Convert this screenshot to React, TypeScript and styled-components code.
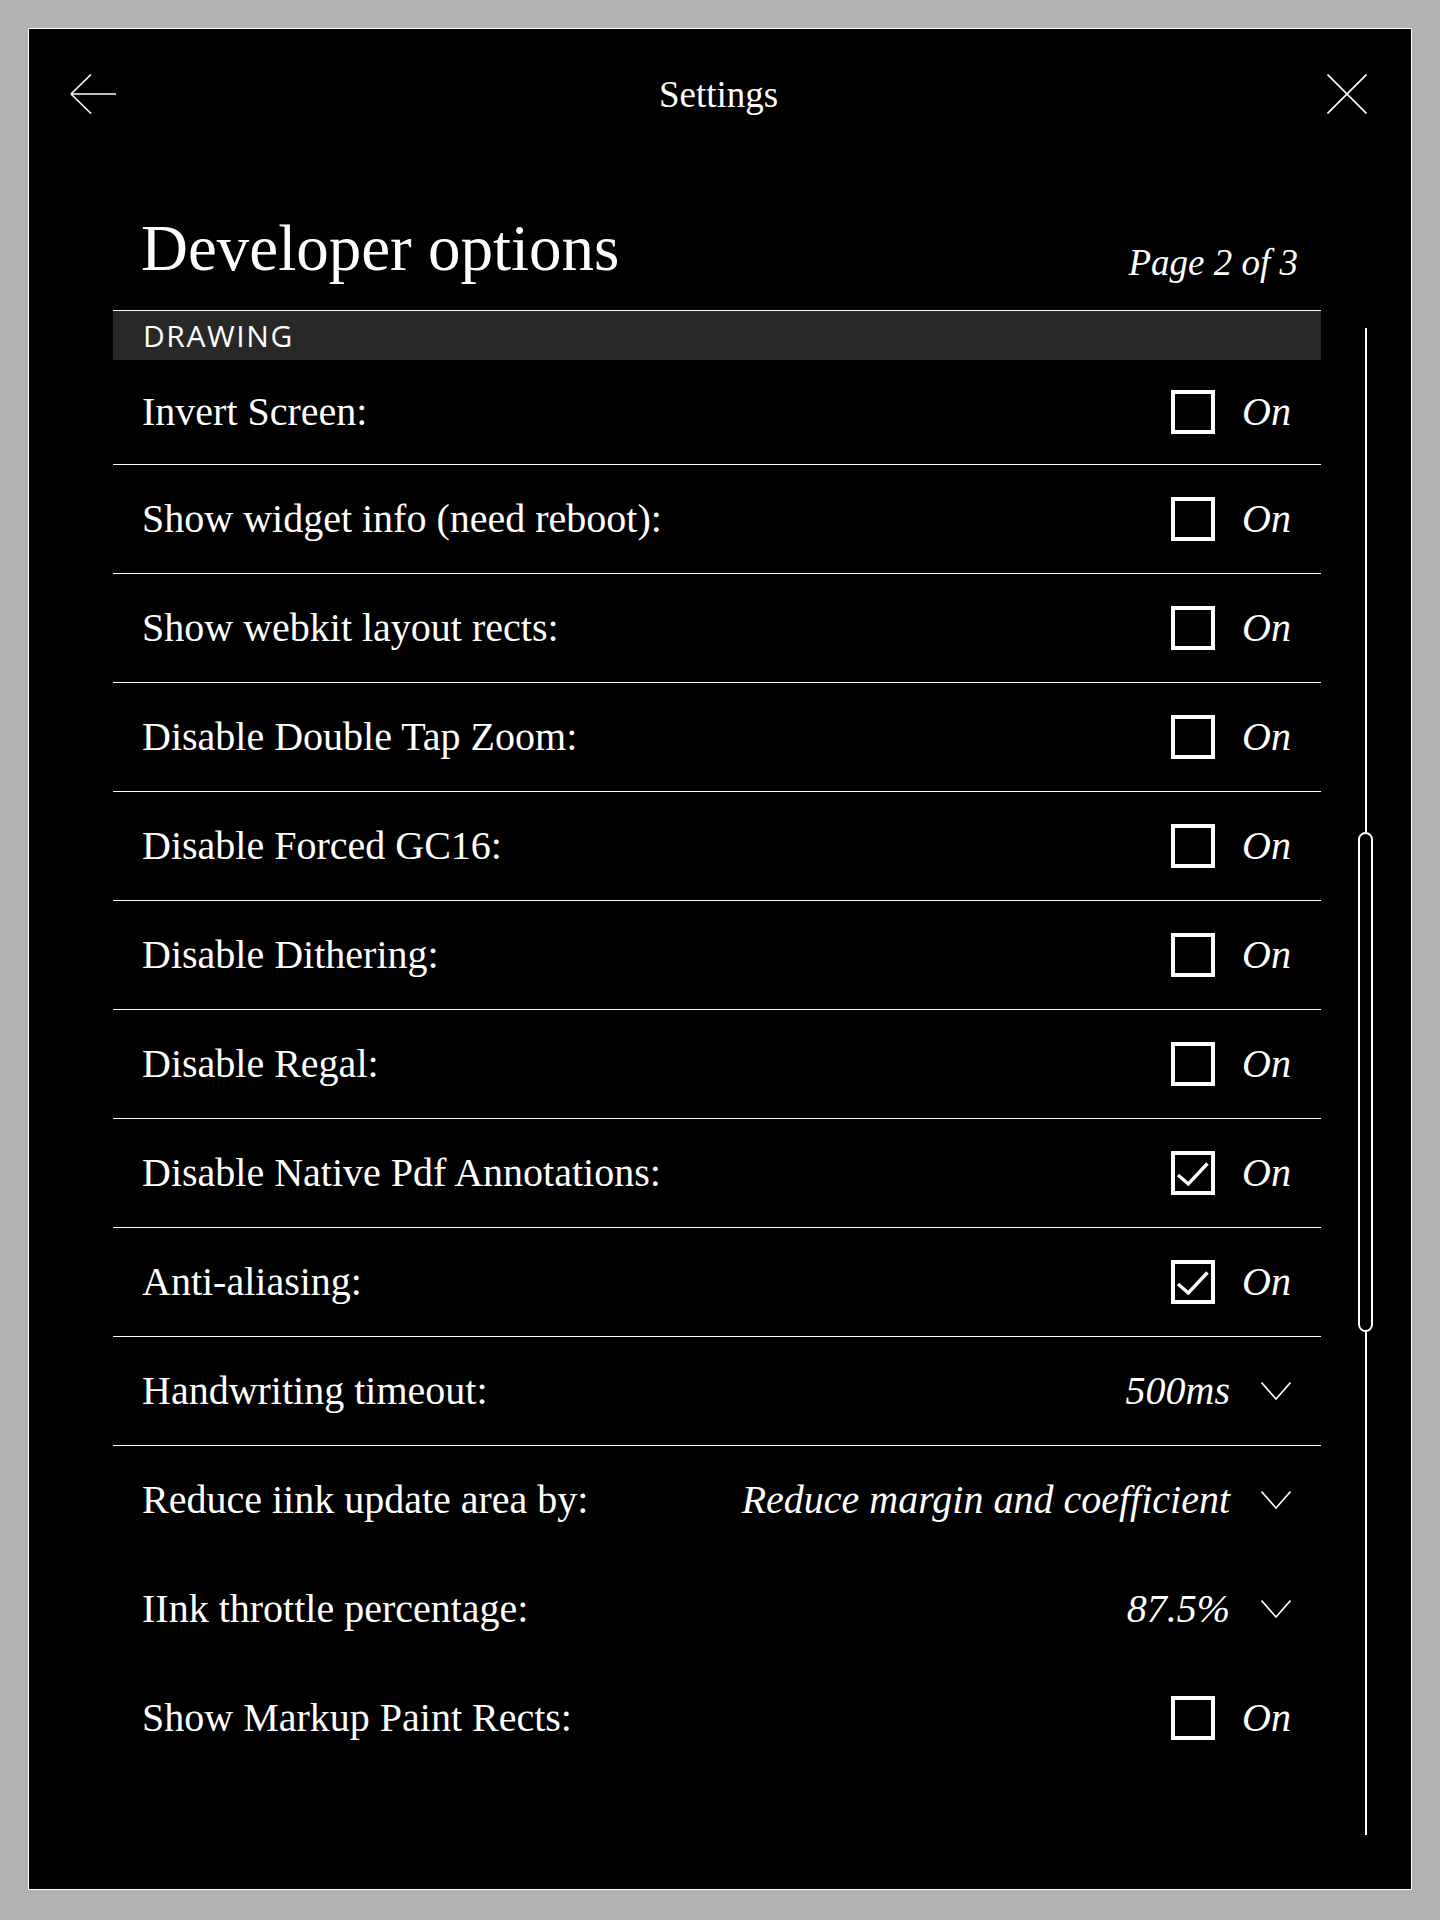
import styled, { createGlobalStyle } from "styled-components";

type Setting = {
  label: string;
  kind: "check" | "select";
  checked?: boolean;
  value?: string;
  divider: boolean;
};

const settings: Setting[] = [
  { label: "Invert Screen:", kind: "check", divider: true },
  { label: "Show widget info (need reboot):", kind: "check", divider: true },
  { label: "Show webkit layout rects:", kind: "check", divider: true },
  { label: "Disable Double Tap Zoom:", kind: "check", divider: true },
  { label: "Disable Forced GC16:", kind: "check", divider: true },
  { label: "Disable Dithering:", kind: "check", divider: true },
  { label: "Disable Regal:", kind: "check", divider: true },
  { label: "Disable Native Pdf Annotations:", kind: "check", checked: true, divider: true },
  { label: "Anti-aliasing:", kind: "check", checked: true, divider: true },
  { label: "Handwriting timeout:", kind: "select", value: "500ms", divider: true },
  { label: "Reduce iink update area by:", kind: "select", value: "Reduce margin and coefficient", divider: false },
  { label: "IInk throttle percentage:", kind: "select", value: "87.5%", divider: false },
  { label: "Show Markup Paint Rects:", kind: "check", divider: false },
];

const GlobalStyle = createGlobalStyle`
  html, body {
    margin: 0;
    padding: 0;
    background: #b3b3b3;
  }
  body {
    font-family: "Liberation Serif", "Times New Roman", serif;
    color: #fff;
  }
`;

const Page = styled.div`
  padding: 28px;
  background: #b3b3b3;
`;

const Panel = styled.div`
  box-sizing: border-box;
  width: 1384px;
  height: 1862px;
  border: 1px solid #fff;
  background: #000;
  display: flex;
  flex-direction: column;
`;

const TopBar = styled.header`
  display: grid;
  grid-template-columns: 1fr auto 1fr;
  align-items: center;
  height: 40px;
  margin-top: 44px;
  padding: 0 44px 0 41px;
`;

const TopTitle = styled.div`
  font-size: 37px;
  line-height: 40px;
  padding-top: 2px;
`;

const IconSlot = styled.div<{ $end?: boolean }>`
  display: flex;
  justify-content: ${(p) => (p.$end ? "flex-end" : "flex-start")};
  svg {
    display: block;
  }
`;

const Main = styled.div`
  display: flex;
  align-items: flex-start;
`;

const Content = styled.div`
  width: 1208px;
  margin-left: 84px;
`;

const TitleRow = styled.div`
  display: flex;
  justify-content: space-between;
  align-items: flex-end;
  margin-top: 102px;
  padding: 0 23px 29px 28px;
`;

const Title = styled.h1`
  margin: 0;
  font-size: 65px;
  font-weight: normal;
  line-height: 66px;
`;

const PageInfo = styled.div`
  font-size: 37px;
  font-style: italic;
  line-height: 37px;
`;

const SectionHeader = styled.div`
  border-top: 1px solid #fff;
  height: 49px;
  background: #282828;
  padding-left: 30px;
  font-family: "Open Sans", "Noto Sans", sans-serif;
  font-size: 30px;
  font-weight: 500;
  line-height: 49px;
  letter-spacing: 1.6px;
`;

const List = styled.div`
  display: flex;
  flex-direction: column;
`;

const Row = styled.div<{ $divider: boolean }>`
  display: flex;
  align-items: center;
  justify-content: space-between;
  height: 108px;
  padding: 0 30px 0 29px;
  border-bottom: 1px solid ${(p) => (p.$divider ? "#fff" : "transparent")};
  font-size: 40px;
  line-height: 40px;

  &:first-child {
    height: 104px;
  }
`;

const Label = styled.span`
  white-space: nowrap;
`;

const Control = styled.div`
  display: flex;
  align-items: center;
`;

const Box = styled.span`
  box-sizing: border-box;
  width: 44px;
  height: 44px;
  border: 4px solid #fff;
  display: flex;
  align-items: center;
  justify-content: center;
  margin-right: 27px;
`;

const Value = styled.span`
  font-style: italic;
  white-space: nowrap;
`;

const Chevron = styled.svg`
  display: block;
  margin-left: 31px;
`;

const ScrollTrack = styled.div`
  display: flex;
  flex-direction: column;
  align-items: center;
  width: 15px;
  margin: 215px 0 0 37px;
`;

const TrackLine = styled.div<{ $h: number }>`
  width: 2px;
  height: ${(p) => p.$h}px;
  background: #fff;
`;

const Thumb = styled.div<{ $h: number }>`
  box-sizing: border-box;
  width: 15px;
  height: ${(p) => p.$h}px;
  border: 2px solid #fff;
  border-radius: 8px;
  background: #000;
`;

function BackArrow() {
  return (
    <svg width="46" height="40" viewBox="0 0 46 40" fill="none" stroke="#fff" strokeWidth="1.6">
      <path d="M1 20H46M1 20L21 0.5M1 20L21 39.5" />
    </svg>
  );
}

function CloseIcon() {
  return (
    <svg width="40" height="40" viewBox="0 0 40 40" fill="none" stroke="#fff" strokeWidth="1.6">
      <path d="M0.5 0.5L39.5 39.5M39.5 0.5L0.5 39.5" />
    </svg>
  );
}

function CheckBox({ checked }: { checked?: boolean }) {
  return (
    <Box>
      {checked ? (
        <svg width="36" height="36" viewBox="0 0 36 36" fill="none" stroke="#fff" strokeWidth="3.4">
          <path d="M3 20L13.3 29L32.5 8.5" />
        </svg>
      ) : null}
    </Box>
  );
}

function SettingRow({ item }: { item: Setting }) {
  return (
    <Row $divider={item.divider}>
      <Label>{item.label}</Label>
      {item.kind === "check" ? (
        <Control>
          <CheckBox checked={item.checked} />
          <Value>On</Value>
        </Control>
      ) : (
        <Control>
          <Value>{item.value}</Value>
          <Chevron width="30" height="18" viewBox="0 0 30 18" fill="none" stroke="#fff" strokeWidth="1.6">
            <path d="M0.5 0.5L15 17L29.5 0.5" />
          </Chevron>
        </Control>
      )}
    </Row>
  );
}

function App() {
  const trackLength = 1507;
  const thumbTop = 504;
  const thumbHeight = 500;

  return (
    <Page>
      <GlobalStyle />
      <Panel>
        <TopBar>
          <IconSlot>
            <BackArrow />
          </IconSlot>
          <TopTitle>Settings</TopTitle>
          <IconSlot $end>
            <CloseIcon />
          </IconSlot>
        </TopBar>
        <Main>
          <Content>
            <TitleRow>
              <Title>Developer options</Title>
              <PageInfo>Page 2 of 3</PageInfo>
            </TitleRow>
            <SectionHeader>DRAWING</SectionHeader>
            <List>
              {settings.map((item) => (
                <SettingRow key={item.label} item={item} />
              ))}
            </List>
          </Content>
          <ScrollTrack>
            <TrackLine $h={thumbTop} />
            <Thumb $h={thumbHeight} />
            <TrackLine $h={trackLength - thumbTop - thumbHeight} />
          </ScrollTrack>
        </Main>
      </Panel>
    </Page>
  );
}

export default App;
